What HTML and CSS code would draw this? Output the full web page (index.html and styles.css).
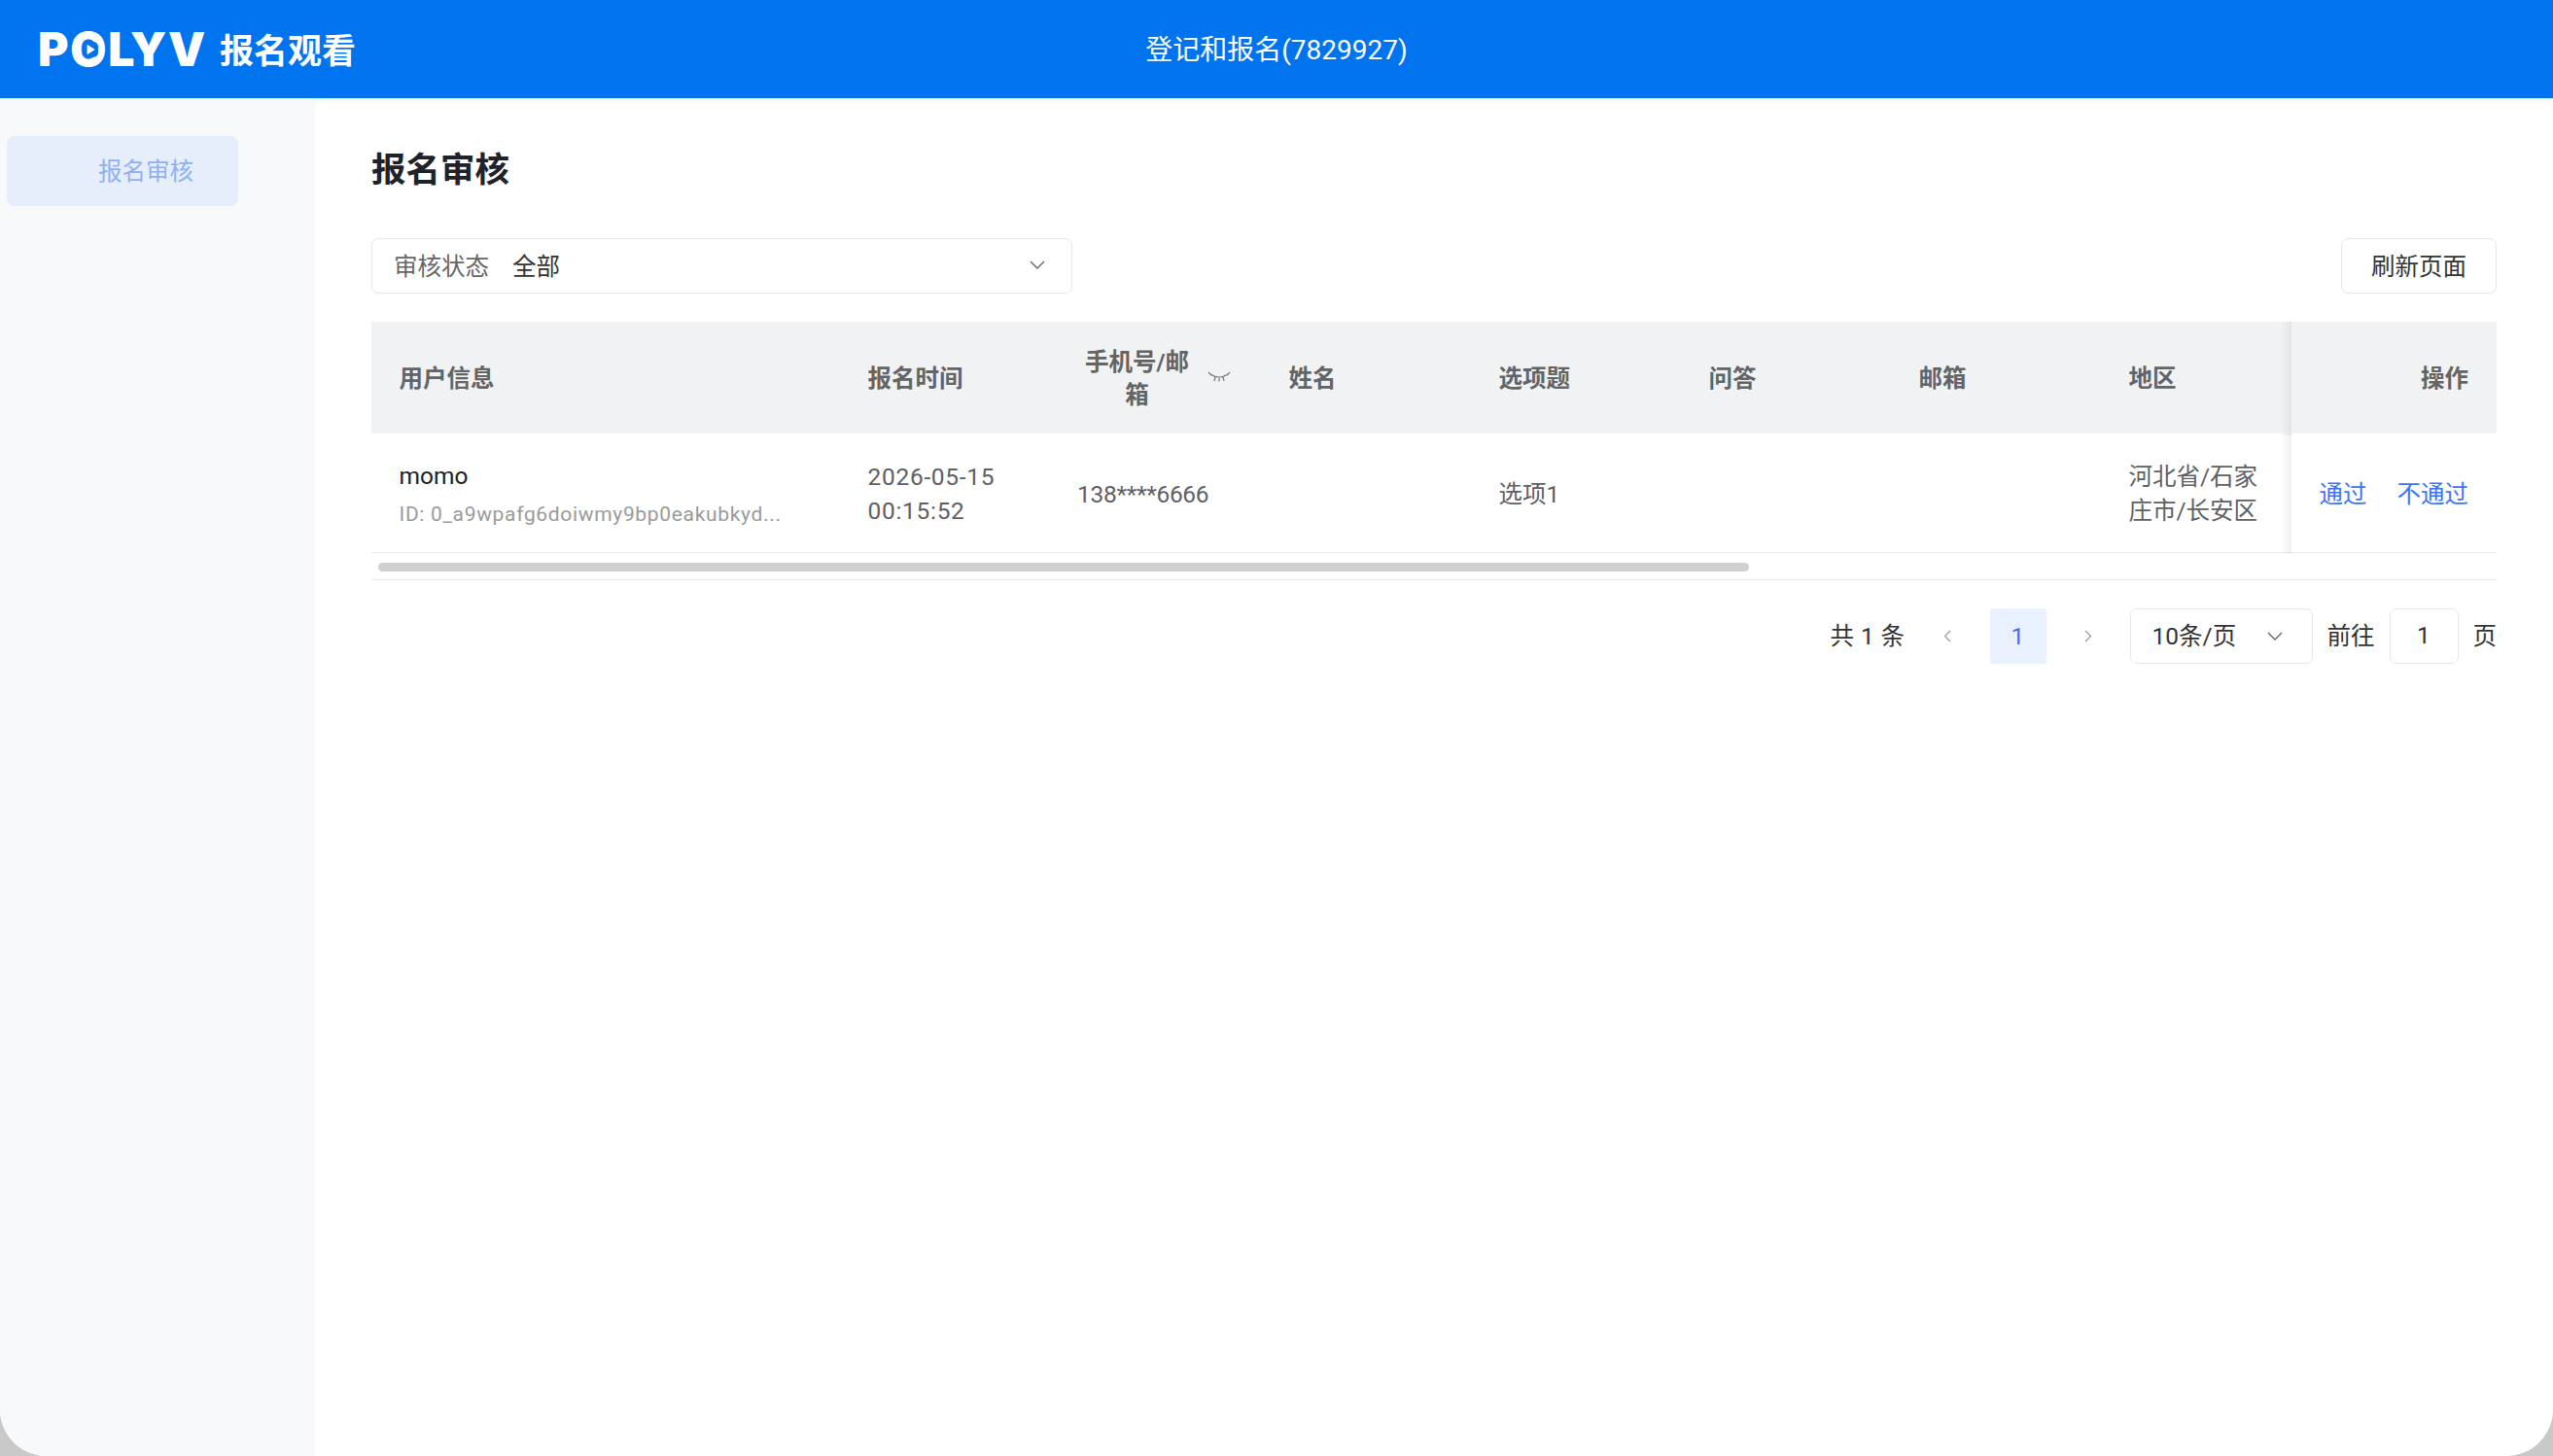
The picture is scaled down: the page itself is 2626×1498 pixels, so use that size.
FILE: index.html
```html
<!DOCTYPE html>
<html>
<head>
    <title>报名审核</title>
    <link rel="stylesheet" href="styles.css">
</head>
<body>
    <div class="app">
        <header class="topbar">
            <div class="logo">
                <span class="logo-word">POLYV
                    <svg class="logo-play" width="16" height="16" viewBox="0 0 16 16">
                        <rect width="16" height="16" rx="5" fill="#0073ef"/>
                        <path d="M5 3.5 L12 8 L5 12.5 Z" fill="#fff" stroke="#fff" stroke-width="1" stroke-linejoin="round"/>
                    </svg>
                </span>
                <span class="logo-text">报名观看</span>
            </div>
            <div class="topbar-title">登记和报名(7829927)</div>
        </header>

        <div class="body-row">
            <aside class="sidebar">
                <div class="menu-item">报名审核</div>
            </aside>

            <main class="main">
                <h1 class="page-title">报名审核</h1>

                <div class="toolbar">
                    <div class="filter">
                        <span class="filter-label">审核状态</span>
                        <span class="filter-value">全部</span>
                        <svg class="chevron" width="16" height="9" viewBox="0 0 16 9">
                            <path d="M1 1 L8 8 L15 1" fill="none" stroke="#666" stroke-width="1.4"/>
                        </svg>
                    </div>
                    <button class="btn">刷新页面</button>
                </div>

                <table class="data-table">
                    <colgroup>
                        <col class="col-user">
                        <col class="col-time">
                        <col class="col-phone">
                        <col class="col-std">
                        <col class="col-std">
                        <col class="col-std">
                        <col class="col-std">
                        <col class="col-area">
                        <col class="col-op">
                    </colgroup>
                    <thead>
                        <tr>
                            <th>用户信息</th>
                            <th>报名时间</th>
                            <th>
                                <div class="phone-head">
                                    <span class="phone-head-text">手机号/邮<br>箱</span>
                                    <svg class="eye" width="24" height="11" viewBox="0 0 24 11">
                                        <path d="M3 3 Q12 9 21 3 M1 1 L4 4 M23 1 L20 4 M8 6 L7 10 M12 7 L12 10.5 M16 6 L17 10" fill="none" stroke="#777" stroke-width="1.2"/>
                                    </svg>
                                </div>
                            </th>
                            <th>姓名</th>
                            <th>选项题</th>
                            <th>问答</th>
                            <th>邮箱</th>
                            <th>地区</th>
                            <th class="op-cell op-head">操作</th>
                        </tr>
                    </thead>
                    <tbody>
                        <tr>
                            <td>
                                <div class="user-name">momo</div>
                                <div class="user-id">ID: 0_a9wpafg6doiwmy9bp0eakubkyd...</div>
                            </td>
                            <td class="time-cell">2026-05-15<br>00:15:52</td>
                            <td class="phone-cell">138****6666</td>
                            <td></td>
                            <td>选项1</td>
                            <td></td>
                            <td></td>
                            <td>河北省/石家<br>庄市/长安区</td>
                            <td class="op-cell">
                                <div class="op-links">
                                    <a class="link">通过</a>
                                    <a class="link">不通过</a>
                                </div>
                            </td>
                        </tr>
                    </tbody>
                </table>

                <div class="scroll-track">
                    <div class="scroll-thumb"></div>
                </div>

                <div class="pager">
                    <span class="pager-text pager-total">共 1 条</span>
                    <span class="pager-arrow">
                        <svg width="8" height="13" viewBox="0 0 8 13"><path d="M7 1 L1.5 6.5 L7 12" fill="none" stroke="#999" stroke-width="1.2"/></svg>
                    </span>
                    <span class="pager-num">1</span>
                    <span class="pager-arrow">
                        <svg width="8" height="13" viewBox="0 0 8 13"><path d="M1 1 L6.5 6.5 L1 12" fill="none" stroke="#999" stroke-width="1.2"/></svg>
                    </span>
                    <div class="pager-size">
                        <span class="pager-text">10条/页</span>
                        <svg width="16" height="9" viewBox="0 0 16 9">
                            <path d="M1 1 L8 8 L15 1" fill="none" stroke="#666" stroke-width="1.4"/>
                        </svg>
                    </div>
                    <span class="pager-text pager-goto">前往</span>
                    <div class="pager-input">1</div>
                    <span class="pager-text pager-unit">页</span>
                </div>
            </main>
        </div>
    </div>
</body>
</html>
```

FILE: styles.css
```css
* {
    box-sizing: border-box;
}
html, body {
    margin: 0;
    height: 100%;
    overflow: hidden;
}
body {
    font-family: Roboto, "Noto Sans CJK SC", sans-serif;
    font-size: 24.5px;
    color: #5f6063;
    background: #c9c9c9;
}
.app {
    display: flex;
    flex-direction: column;
    height: 100%;
    background: #fff;
    border-radius: 0 0 48px 48px;
    overflow: hidden;
}
.topbar {
    display: grid;
    grid-template-columns: 1fr auto 1fr;
    align-items: center;
    flex: none;
    height: 101px;
    padding-left: 39px;
    background: #0073ef;
    color: #fff;
}
.logo {
    display: flex;
    align-items: center;
    gap: 13px;
}
.logo-word {
    position: relative;
    font-family: Inter, sans-serif;
    font-size: 48px;
    font-weight: 900;
    line-height: 50px;
    letter-spacing: 1.8px;
}
.logo-play {
    position: absolute;
    left: 46px;
    top: 17px;
}
.logo-text {
    padding-bottom: 3px;
    font-size: 35px;
    font-weight: 700;
}
.topbar-title {
    margin-left: -39px;
    padding-bottom: 3px;
    font-size: 28px;
}
.body-row {
    display: flex;
    flex: 1;
    min-height: 0;
}
.sidebar {
    flex: none;
    width: 324px;
    padding: 39px 0 0 7px;
    background: #f8f9fb;
}
.menu-item {
    width: 238px;
    height: 72px;
    padding: 1px 0 0 94px;
    line-height: 72px;
    background: #e5eefa;
    border-radius: 8px;
    color: #8fb0f6;
}
.main {
    flex: 1;
    min-width: 0;
    padding: 50px 58px 0 58px;
    box-shadow: inset 0 7px 8px -5px rgba(0, 0, 0, 0.05);
}
.page-title {
    margin: 0 0 45px 0;
    font-size: 35.5px;
    font-weight: 700;
    line-height: 49px;
    color: #1f2329;
}
.toolbar {
    display: flex;
    justify-content: space-between;
    margin-bottom: 29px;
}
.filter {
    display: flex;
    align-items: center;
    width: 721px;
    height: 57px;
    padding: 0 20px 2px 22px;
    border: 1.5px solid #e8e8ea;
    border-radius: 7px;
}
.filter-label {
    color: #666;
}
.filter-value {
    margin-left: 24px;
    color: #333;
}
.chevron {
    margin-left: auto;
    margin-right: 7px;
}
.btn {
    width: 160px;
    height: 57px;
    padding: 0 0 2px;
    background: #fff;
    border: 1.5px solid #e8e8ea;
    border-radius: 7px;
    font: inherit;
    color: #333;
}
.data-table {
    width: 2186px;
    table-layout: fixed;
    border-collapse: separate;
    border-spacing: 0;
}
.col-user { width: 482px; }
.col-time { width: 215px; }
.col-phone { width: 218px; }
.col-std { width: 216px; }
.col-area { width: 196px; }
.col-op { width: 211px; }
.data-table th {
    height: 115px;
    padding: 3px 29px 0 28.5px;
    background: #f1f2f4;
    font-weight: 700;
    text-align: left;
    line-height: 34px;
    color: #636466;
}
.data-table td {
    height: 123px;
    padding: 2px 0 0 28.5px;
    border-bottom: 1.5px solid #ececee;
    line-height: 35px;
}
.phone-head {
    display: flex;
    align-items: center;
    gap: 10px;
    margin-left: 0;
}
.phone-head-text {
    width: 124px;
    flex: none;
    text-align: center;
}
.eye {
    flex: none;
    margin-top: -6px;
}
.time-cell {
    letter-spacing: 0.7px;
}
.data-table .phone-cell {
    padding-left: 29px;
    letter-spacing: -0.3px;
}
.user-name {
    color: #222;
}
.user-id {
    margin-top: 6px;
    font-size: 21px;
    line-height: 32px;
    letter-spacing: 0.67px;
    color: #9a9a9a;
    white-space: nowrap;
}
.op-cell {
    position: relative;
}
.op-cell::before {
    content: "";
    position: absolute;
    left: -11px;
    top: 0;
    bottom: -2px;
    width: 11px;
    background: linear-gradient(to right, rgba(0, 0, 0, 0), rgba(40, 40, 80, 0.07));
}
.data-table .op-head {
    text-align: right;
}
.data-table td.op-cell {
    padding: 2px 29px 0 0;
}
.op-links {
    display: flex;
    justify-content: flex-end;
    gap: 31px;
}
.link {
    color: #3b74f5;
}
.scroll-track {
    height: 28px;
    padding: 10px 0 0 7px;
    border-bottom: 1.5px solid #ececee;
}
.scroll-thumb {
    width: 1410px;
    height: 9px;
    background: #d0d0d0;
    border-radius: 5px;
}
.pager {
    display: flex;
    justify-content: flex-end;
    align-items: center;
    height: 57px;
    margin-top: 29px;
    color: #333;
}
.pager-text {
    padding-bottom: 4px;
}
.pager-arrow {
    display: flex;
    justify-content: center;
    align-items: center;
    width: 57px;
    height: 57px;
}
.pager-total {
    margin-right: 15px;
    letter-spacing: 0.4px;
}
.pager-num {
    width: 58px;
    height: 57px;
    margin: 0 15px;
    line-height: 57px;
    text-align: center;
    background: #e9f0fe;
    border-radius: 3px;
    color: #3b74f5;
}
.pager-size {
    display: flex;
    align-items: center;
    justify-content: space-between;
    width: 188px;
    height: 57px;
    margin-left: 14px;
    padding: 0 30px 0 22px;
    border: 1.5px solid #e8e8ea;
    border-radius: 7px;
}
.pager-goto {
    margin: 0 15px;
}
.pager-input {
    width: 71px;
    height: 57px;
    line-height: 54px;
    text-align: center;
    border: 1.5px solid #e8e8ea;
    border-radius: 7px;
}
.pager-unit {
    margin-left: 15px;
}
```
